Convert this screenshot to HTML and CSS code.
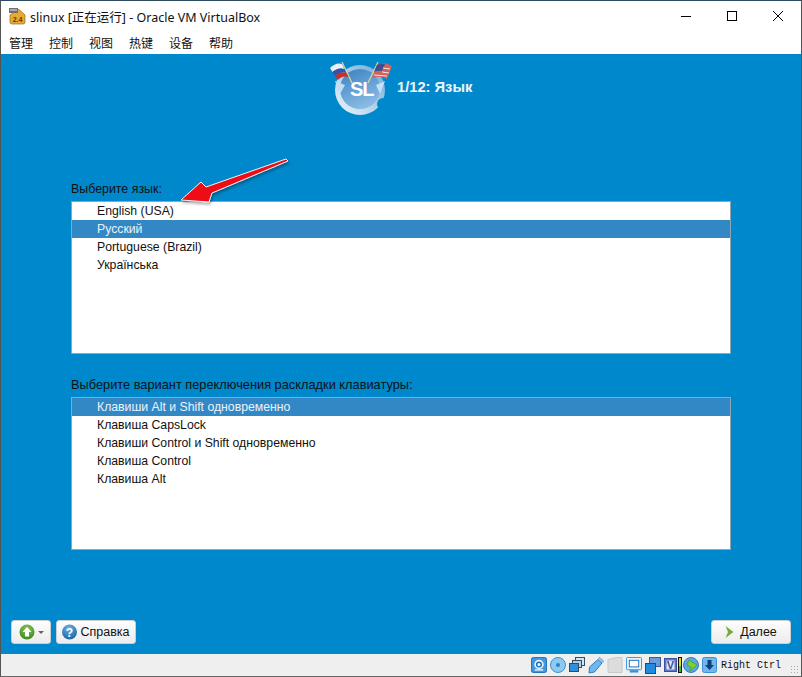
FILE: index.html
```html
<!DOCTYPE html>
<html lang="zh">
<head>
    <meta charset="UTF-8">
    <meta name="viewport" content="width=device-width, initial-scale=1.0">
    <title>slinux [正在运行] - Oracle VM VirtualBox</title>
    <link rel="stylesheet" href="styles.css">
</head>
<body>

<div class="window">
    <div class="titlebar">
        <svg class="app-icon" width="17" height="17" viewBox="0 0 17 17">
            <path d="M1 14 L1 7 L8 1.500 L10 1.500 L16 7 L16 14 Q16 16 14 16 L3 16 Q1 16 1 14 Z" fill="#eda92f" stroke="#8a6a2a" stroke-width="0.700"/>
            <rect x="0" y="0" width="9" height="5" fill="#6e6e6e"/>
            <rect x="1" y="1.500" width="7" height="1" fill="#e6e6e6"/>
            <text x="8.500" y="13.500" class="app-mark">2.4</text>
        </svg>
        <span class="title-text">slinux [正在运行] - Oracle VM VirtualBox</span>
        <div class="win-buttons">
            <svg width="12" height="12" viewBox="0 0 12 12"><path d="M1 6.500 H11" stroke="#000" stroke-width="1"/></svg>
            <svg width="12" height="12" viewBox="0 0 12 12"><rect x="1.500" y="1.500" width="9" height="9" fill="none" stroke="#000"/></svg>
            <svg width="12" height="12" viewBox="0 0 12 12"><path d="M1 1 L11 11 M11 1 L1 11" stroke="#000" stroke-width="1"/></svg>
        </div>
    </div>

    <div class="menubar">
        <span>管理</span>
        <span>控制</span>
        <span>视图</span>
        <span>热键</span>
        <span>设备</span>
        <span>帮助</span>
    </div>

    <div class="guest">
        <div class="header">
            <svg class="logo" width="66" height="60" viewBox="0 0 66 60">
                <defs>
                    <linearGradient id="ball" x1="0.300" y1="0" x2="0.700" y2="1">
                        <stop offset="0" stop-color="#4287c6"/>
                        <stop offset="1" stop-color="#8fbfe6"/>
                    </linearGradient>
                    <linearGradient id="ring" x1="1" y1="0" x2="0" y2="1">
                        <stop offset="0" stop-color="#6aa8d8"/>
                        <stop offset="1" stop-color="#f2f8fc"/>
                    </linearGradient>
                </defs>
                <path d="M25 16 L35 10 L43 16 L34 21 Z" fill="#efc94a"/>
                <circle cx="33" cy="33" r="25" fill="url(#ring)"/>
                <circle cx="33" cy="32" r="20" fill="url(#ball)"/>
                <path d="M8 24 L18 28 L13 37 Z" fill="#bfe0f7"/>
                <path d="M58 24 L49 28 L53 37 Z" fill="#bfe0f7"/>
                <circle cx="56" cy="47" r="6" fill="#0088cc"/>
                <path d="M15 5 L25 26" stroke="#e3d697" stroke-width="1.200"/>
                <path d="M51 5 L41 26" stroke="#e3d697" stroke-width="1.200"/>
                <path d="M3 11 Q9 5 15 7 L17.500 12 Q11 10 5.500 15 Z" fill="#eceef2"/>
                <path d="M5.500 15 Q11 10 17.500 12 L19.500 16 Q13 14 8 19 Z" fill="#3c4fa8"/>
                <path d="M8 19 Q13 14 19.500 16 L21.500 20 Q15 18 11 23 Z" fill="#c9302c"/>
                <path d="M50 8 Q58 4 65 9 L60 22 Q53 18 45 21 Z" fill="#d0625c"/>
                <path d="M50 8 Q54 6 58 7 L55 14 Q51 13 47 15 Z" fill="#3d4f8f"/>
                <path d="M47 18 L60 19 M56 11 L63 12 M55 15 L62 16" stroke="#f2e6e6" stroke-width="1"/>
            </svg>
            <span class="logo-sl">SL</span>
            <h1>1/12: Язык</h1>
        </div>

        <div class="form">
            <label class="list-label">Выберите язык:</label>
            <ul class="list">
                <li>English (USA)</li>
                <li class="selected">Русский</li>
                <li>Portuguese (Brazil)</li>
                <li>Українська</li>
            </ul>

            <label class="list-label second">Выберите вариант переключения раскладки клавиатуры:</label>
            <ul class="list">
                <li class="selected">Клавиши Alt и Shift одновременно</li>
                <li>Клавиша CapsLock</li>
                <li>Клавиши Control и Shift одновременно</li>
                <li>Клавиша Control</li>
                <li>Клавиша Alt</li>
            </ul>
        </div>

        <div class="buttons">
            <button class="btn btn-up" type="button">
                <svg width="16" height="16" viewBox="0 0 16 16">
                    <defs>
                        <radialGradient id="green" cx="50%" cy="30%" r="70%">
                            <stop offset="0" stop-color="#8cc65a"/>
                            <stop offset="1" stop-color="#3c8a1e"/>
                        </radialGradient>
                    </defs>
                    <circle cx="8" cy="8" r="7.500" fill="url(#green)"/>
                    <path d="M8 3 L12.500 8 H10 V12.500 H6 V8 H3.500 Z" fill="#fff"/>
                </svg>
                <span class="caret"></span>
            </button>
            <button class="btn btn-help" type="button">
                <svg width="15" height="16" viewBox="0 0 15 16">
                    <defs>
                        <radialGradient id="blue" cx="45%" cy="25%" r="80%">
                            <stop offset="0" stop-color="#6fb3e6"/>
                            <stop offset="1" stop-color="#14609f"/>
                        </radialGradient>
                    </defs>
                    <circle cx="7.500" cy="8" r="7.500" fill="url(#blue)"/>
                    <text x="7.500" y="12.500" class="help-mark">?</text>
                </svg>
                Справка
            </button>
            <button class="btn btn-next" type="button">
                <svg width="9" height="12" viewBox="0 0 9 12">
                    <path d="M0.500 0 L8.500 6 L0.500 12 L3 6 Z" fill="#74ad3c"/>
                </svg>
                Далее
            </button>
        </div>

        <svg class="arrow" width="120" height="54" viewBox="0 0 120 54">
            <defs>
                <filter id="shadow" x="-10%" y="-20%" width="120%" height="150%">
                    <feDropShadow dx="1" dy="2" stdDeviation="1.500" flood-color="#000" flood-opacity="0.350"/>
                </filter>
            </defs>
            <path d="M113 5 L37 37 L34 46 L6 44 L26 26 L31 31 L111 3 Z" fill="#ee0d18" stroke="#f4f4f4" stroke-width="1" stroke-linejoin="round" filter="url(#shadow)"/>
        </svg>
    </div>

    <div class="statusbar">
        <svg width="16" height="16" viewBox="0 0 17 17"><rect x="0.500" y="0.500" width="16" height="16" rx="2" fill="#3f97e0" stroke="#1f6db5"/><circle cx="8.500" cy="8" r="5" fill="#e7f3fb"/><circle cx="8.500" cy="8" r="2.500" fill="none" stroke="#1f6db5" stroke-width="1.500"/><rect x="4" y="13" width="9" height="1.500" fill="#e7f3fb"/></svg>
        <svg class="gap" width="16" height="16" viewBox="0 0 16 16"><circle cx="8" cy="8" r="7.500" fill="#8ccaf2" stroke="#3f8fd0"/><circle cx="8" cy="8" r="2" fill="#2f7fc4"/></svg>
        <svg class="gap" width="16" height="16" viewBox="0 0 16 16"><rect x="6.500" y="0.500" width="9" height="8" fill="#cfe6f7" stroke="#3a4a58"/><rect x="3.500" y="3.500" width="9" height="7" fill="#a8d2f0" stroke="#3a4a58"/><rect x="0.500" y="6.500" width="9" height="8" fill="#2f8fdc" stroke="#3a4a58"/></svg>
        <svg class="gap" width="16" height="17" viewBox="0 0 16 17"><path d="M1 16 L1.500 10 L10 2.500 L14 6 L6.500 15 Z" fill="#6fb7ec" stroke="#2f7fc4"/><path d="M10.500 1 L12 0.500 L15.500 4 L15 5.500 Z" fill="#9ccdf0" stroke="#2f7fc4" stroke-width="0.500"/></svg>
        <svg class="gap" width="16" height="16" viewBox="0 0 15 16"><path d="M0.500 2.500 L9 0.500 L14.500 0.500 L14.500 15.500 L0.500 15.500 Z" fill="#dcdcdc" stroke="#c8c8c8"/></svg>
        <svg class="gap" width="16" height="16" viewBox="0 0 17 17"><rect x="0.500" y="0.500" width="16" height="13" rx="1" fill="#eaf4fb" stroke="#2f8fdc"/><rect x="3.500" y="3.500" width="10" height="7" fill="#fff" stroke="#1f6db5"/><rect x="4" y="14" width="9" height="2.500" fill="#2f8fdc"/></svg>
        <svg class="gap" width="16" height="17" viewBox="0 0 16 17"><rect x="4.500" y="0.500" width="11" height="9" fill="#6b9bd8" stroke="#3a5a9a"/><rect x="0.500" y="6.500" width="10" height="10" fill="#1f8ae0" stroke="#16507f"/></svg>
        <svg class="gap" width="13" height="16" viewBox="0 0 13 16"><rect x="0.500" y="1.500" width="12" height="13" fill="#5c78c8" stroke="#3b4f9a"/><rect x="2.500" y="3.500" width="8" height="9" fill="#dfe6f5"/><text x="6.500" y="12" class="vt-mark">V</text></svg>
        <svg class="meter" width="4" height="16" viewBox="0 0 4 16"><rect width="4" height="16" fill="#111"/><rect x="1" y="1" width="2" height="8" fill="#e6d81e"/><rect x="1" y="9" width="2" height="6" fill="#3db83d"/></svg>
        <svg class="after-meter" width="16" height="16" viewBox="0 0 16 16"><circle cx="8" cy="8" r="7.500" fill="#5ba8dd" stroke="#2f7fc4"/><path d="M6 3 L14 8 L7 14 L8 10 L4 8 Z" fill="#7fd02c" stroke="#3e8a12" stroke-width="0.500"/></svg>
        <svg class="gap" width="15" height="16" viewBox="0 0 15 16"><rect x="0.500" y="0.500" width="14" height="15" rx="2" fill="#6fb7ec" stroke="#3f8fd0"/><path d="M5.500 3 H9.500 V8 H12 L7.500 13 L3 8 H5.500 Z" fill="#103e78"/></svg>
        <span class="host-key">Right Ctrl</span>
        <span class="grip"></span>
    </div>
</div>

</body>
</html>
```

FILE: styles.css
```css
html, body {
    margin: 0;
    padding: 0;
    height: 100%;
}

body {
    font-family: "Liberation Sans", Arial, sans-serif;
    background-color: #fff;
    overflow: hidden;
}

.window {
    display: flex;
    flex-direction: column;
    height: 677px;
    width: 802px;
    box-sizing: border-box;
    border-top: 1px solid #2c4a5e;
    border-left: 1px solid #555;
    border-right: 1px solid #555;
    border-bottom: 1px solid #666;
}

.titlebar {
    display: flex;
    align-items: center;
    height: 30px;
    padding-left: 8px;
    background-color: #fff;
    flex-shrink: 0;
}

.app-icon {
    margin-right: 4px;
}

.app-mark {
    font-family: "Liberation Sans", sans-serif;
    font-size: 7px;
    font-weight: bold;
    fill: #5a3a10;
    text-anchor: middle;
}

.title-text {
    font-family: "Noto Sans", "Noto Sans CJK SC", sans-serif;
    font-size: 12.5px;
    color: #111;
    white-space: nowrap;
}

.win-buttons {
    display: flex;
    gap: 34px;
    margin-left: auto;
    margin-right: 17px;
}

.menubar {
    display: flex;
    align-items: center;
    gap: 16px;
    height: 23px;
    padding-left: 8px;
    font-family: "Noto Sans CJK SC", sans-serif;
    font-size: 12px;
    color: #111;
    background-color: #fff;
    flex-shrink: 0;
}

.guest {
    position: relative;
    flex: 1;
    display: flex;
    flex-direction: column;
    background-color: #0088cc;
}

.header {
    position: relative;
    display: flex;
    align-items: center;
    height: 66px;
    padding-left: 326px;
}

.logo-sl {
    position: absolute;
    left: 349px;
    top: 24px;
    font-size: 20px;
    font-weight: bold;
    color: #fff;
    letter-spacing: -1px;
}

.header h1 {
    margin: 0 0 0 4px;
    font-size: 14.7px;
    font-weight: bold;
    color: #eef6fb;
}

.form {
    display: flex;
    flex-direction: column;
    margin: 0 70px;
    padding-top: 62px;
}

.list-label {
    display: block;
    height: 19px;
    font-size: 12.4px;
    line-height: 14px;
    color: #111;
}

.list-label.second {
    margin-top: 24px;
    font-size: 12.8px;
}

.list {
    list-style: none;
    margin: 0;
    padding: 0;
    height: 151px;
    border: 1px solid #8fa6b5;
    background-color: #fff;
}

.list li {
    height: 18px;
    line-height: 18px;
    padding-left: 25px;
    font-size: 12.25px;
    color: #111;
}

.list li.selected {
    background-color: #3288c4;
    color: #eaf3fa;
}

.buttons {
    display: flex;
    margin-top: auto;
    padding: 0 10px 10px 10px;
    gap: 5px;
}

.btn {
    display: flex;
    align-items: center;
    justify-content: center;
    gap: 3px;
    height: 24px;
    padding: 0;
    border: 1px solid #c8ced2;
    border-radius: 3px;
    background: linear-gradient(#fdfdfd, #ececec);
    font-family: "Liberation Sans", Arial, sans-serif;
    font-size: 12.5px;
    color: #111;
}

.btn-up {
    width: 40px;
}

.btn-help {
    width: 80px;
    gap: 3px;
}

.btn-next {
    width: 80px;
    gap: 6px;
    margin-left: auto;
}

.caret {
    width: 0;
    height: 0;
    border-left: 3px solid transparent;
    border-right: 3px solid transparent;
    border-top: 3px solid #666;
}

.help-mark {
    font-family: "Liberation Sans", sans-serif;
    font-size: 12px;
    font-weight: bold;
    fill: #fff;
    text-anchor: middle;
}

.vt-mark {
    font-family: "Liberation Sans", sans-serif;
    font-size: 11px;
    font-weight: bold;
    fill: #3b4f9a;
    text-anchor: middle;
}

.arrow {
    position: absolute;
    left: 174px;
    top: 102px;
}

.statusbar {
    display: flex;
    align-items: center;
    justify-content: flex-end;
    height: 22px;
    padding-right: 20px;
    background-color: #efefef;
    flex-shrink: 0;
    position: relative;
}

.statusbar .gap {
    margin-left: 3px;
}

.statusbar .meter,
.statusbar .after-meter {
    margin-left: 1px;
}

.host-key {
    font-family: "Liberation Mono", monospace;
    font-size: 10px;
    color: #111;
    margin-left: 4px;
}

.grip {
    position: absolute;
    right: 2px;
    bottom: 2px;
    width: 9px;
    height: 9px;
    background: radial-gradient(circle, #aaa 1px, transparent 1px) 0 0 / 3px 3px;
}
```
